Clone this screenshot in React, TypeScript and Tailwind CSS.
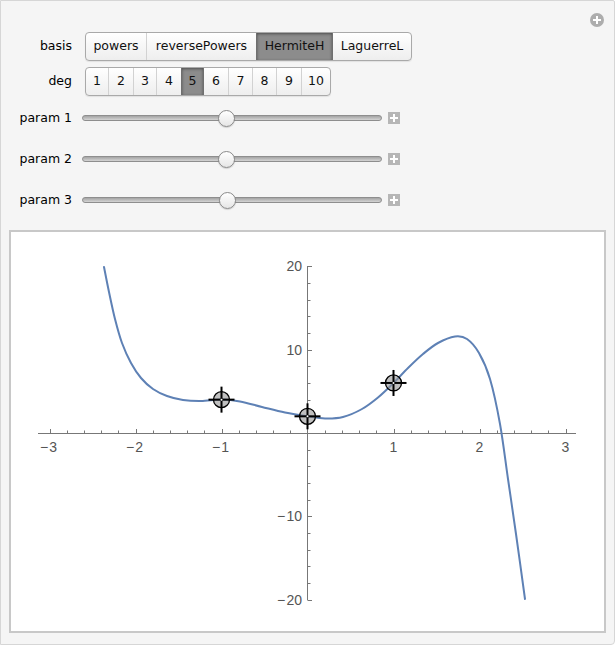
import React from "react";

const X0 = 307.5;
const SX = 86;
const Y0 = 434;
const SY = 8.34;
const px = (v: number) => X0 + SX * v;
const py = (v: number) => Y0 - SY * v;

const curvePts: [number, number][] = [
  [104, 268], [109, 293], [115, 320], [122, 344], [131, 364], [141, 379], [153, 390],
  [167, 397], [183, 401], [201, 402], [221.5, 400.6], [240, 402.5], [262, 408],
  [285, 413.5], [307.5, 417.3], [325, 419.5], [343, 418], [362, 410], [378, 398.5],
  [393.5, 384], [408, 369], [423, 355], [438, 344], [455, 337.5], [467, 340],
  [479, 354], [490, 380], [500, 425], [508, 480], [516, 535], [525, 600],
];

function splinePath(pts: [number, number][]) {
  let d = `M${pts[0][0]},${pts[0][1]}`;
  for (let i = 0; i < pts.length - 1; i++) {
    const p0 = pts[i - 1] || pts[i];
    const p1 = pts[i];
    const p2 = pts[i + 1];
    const p3 = pts[i + 2] || p2;
    const c1x = p1[0] + (p2[0] - p0[0]) / 6;
    const c1y = p1[1] + (p2[1] - p0[1]) / 6;
    const c2x = p2[0] - (p3[0] - p1[0]) / 6;
    const c2y = p2[1] - (p3[1] - p1[1]) / 6;
    d += ` C${c1x.toFixed(2)},${c1y.toFixed(2)} ${c2x.toFixed(2)},${c2y.toFixed(2)} ${p2[0]},${p2[1]}`;
  }
  return d;
}

function Plot() {
  const axis = "#777777";
  const xTicks: React.ReactNode[] = [];
  for (let k = -15; k <= 15; k++) {
    if (k === 0) continue;
    const v = k / 5;
    const x = Math.round(px(v)) + 0.5;
    const major = k % 5 === 0;
    xTicks.push(
      <line key={"xt" + k} x1={x} x2={x} y1={434.5} y2={major ? 430 : 431.5} stroke={axis} strokeWidth={1} />
    );
  }
  const yTicks: React.ReactNode[] = [];
  for (let k = -10; k <= 10; k++) {
    if (k === 0) continue;
    const v = k * 2;
    const y = Math.round(py(v)) + 0.5;
    const major = k % 5 === 0;
    yTicks.push(
      <line key={"yt" + k} x1={307.5} x2={major ? 312 : 310.5} y1={y} y2={y} stroke={axis} strokeWidth={1} />
    );
  }
  const xLabels = [-3, -2, -1, 1, 2, 3];
  const yLabels = [20, 10, -10, -20];
  const fmt = (v: number) => (v < 0 ? "\u2212\u200A" + Math.abs(v) : String(v));
  const markers: [number, number][] = [
    [-1, 4],
    [0, 2],
    [1, 6],
  ];
  return (
    <svg width={593} height={399} viewBox="11 233 593 399" className="block">
      <line x1={38} x2={576} y1={434.5} y2={434.5} stroke={axis} strokeWidth={1} />
      <line x1={307.5} x2={307.5} y1={267} y2={601} stroke={axis} strokeWidth={1} />
      {xTicks}
      {yTicks}
      {xLabels.map((v) => (
        <text
          key={"xl" + v}
          x={px(v) - (v < 0 ? 1 : 0)}
          y={453}
          textAnchor="middle"
          fontFamily="'Liberation Sans', Arial, sans-serif"
          fontSize={14}
          fill="#555555"
        >
          {fmt(v)}
        </text>
      ))}
      {yLabels.map((v) => (
        <text
          key={"yl" + v}
          x={302}
          y={py(v) + 5}
          textAnchor="end"
          fontFamily="'Liberation Sans', Arial, sans-serif"
          fontSize={14}
          fill="#555555"
        >
          {fmt(v)}
        </text>
      ))}
      <path d={splinePath(curvePts)} fill="none" stroke="#5e81b5" strokeWidth={2} strokeLinejoin="round" strokeLinecap="round" />
      {markers.map(([vx, vy]) => {
        const cx = px(vx);
        const cy = py(vy);
        return (
          <g key={"m" + vx}>
            <circle cx={cx} cy={cy} r={8} fill="rgba(150,150,150,0.6)" stroke="#000" strokeWidth={1.3} />
            <line x1={cx - 13} x2={cx + 13} y1={cy} y2={cy} stroke="#000" strokeWidth={2} />
            <line x1={cx} x2={cx} y1={cy - 13} y2={cy + 13} stroke="#000" strokeWidth={2} />
            <circle cx={cx} cy={cy} r={1} fill="#ffffff" />
          </g>
        );
      })}
    </svg>
  );
}

function Segmented({ items, selected, widths }: { items: string[]; selected: number; widths: number[] }) {
  return (
    <div className="flex h-[29px] rounded-[4px] border border-[#a9a9a9] bg-gradient-to-b from-[#ffffff] to-[#eeeeee] shadow-[0_1px_1px_rgba(0,0,0,0.08)] overflow-hidden">
      {items.map((it, i) => {
        const sel = i === selected;
        const prevSel = i - 1 === selected;
        return (
          <div
            key={it}
            style={{ width: widths[i] }}
            className={
              sel
                ? "flex items-center justify-center bg-[#8c8c8c] text-[#111111] shadow-[inset_0_1px_3px_rgba(0,0,0,0.45)] border-x border-[#6f6f6f]"
                : i === 0 || prevSel
                ? "flex items-center justify-center text-[#111111]"
                : "flex items-center justify-center text-[#111111] border-l border-[#d2d2d2]"
            }
          >
            {it}
          </div>
        );
      })}
    </div>
  );
}

function SliderRow({ label, thumb }: { label: string; thumb: number }) {
  return (
    <div className="flex items-center h-[18px]">
      <div className="w-[71px] text-right text-[12.5px] text-black leading-none">{label}</div>
      <div className="relative ml-[10px] w-[300px] h-[18px] flex items-center">
        <div className="w-full h-[6px] rounded-full border border-[#8e8e8e] bg-gradient-to-b from-[#a4a4a4] to-[#d4d4d4]" />
        <div
          className="absolute top-[0.5px] w-[17px] h-[17px] rounded-full border border-[#8a8a8a] bg-gradient-to-b from-[#ffffff] to-[#e6e6e6] shadow-[0_1px_1px_rgba(0,0,0,0.15)]"
          style={{ left: thumb }}
        />
      </div>
      <div className="relative ml-[6px] w-[12px] h-[12px] bg-[#b6b6b6]">
        <div className="absolute left-[2px] top-[5px] w-[8px] h-[2px] bg-white" />
        <div className="absolute left-[5px] top-[2px] w-[2px] h-[8px] bg-white" />
      </div>
    </div>
  );
}

export default function App() {
  return (
    <div className="w-[616px] h-[648px] bg-white font-['DejaVu_Sans',sans-serif]">
      <div className="relative w-[615px] h-[645px] bg-[#f5f5f5] border border-[#d6d6d6] rounded-br-[4px] rounded-tr-[2px]">
        <div className="absolute left-[589px] top-[12px] w-[14px] h-[14px] rounded-full bg-[#adadad]">
          <div className="absolute left-[3px] top-[6px] w-[8px] h-[2px] bg-white" />
          <div className="absolute left-[6px] top-[3px] w-[2px] h-[8px] bg-white" />
        </div>
        <div className="pt-[31px] flex flex-col">
          <div className="flex items-center h-[29px] text-[12.5px]">
            <div className="w-[71px] text-right text-black">basis</div>
            <div className="ml-[13px]">
              <Segmented
                items={["powers", "reversePowers", "HermiteH", "LaguerreL"]}
                selected={2}
                widths={[60, 110, 77, 78]}
              />
            </div>
          </div>
          <div className="flex items-center h-[29px] mt-[6px] text-[12.5px]">
            <div className="w-[71px] text-right text-black">deg</div>
            <div className="ml-[13px]">
              <Segmented
                items={["1", "2", "3", "4", "5", "6", "7", "8", "9", "10"]}
                selected={4}
                widths={[22, 25, 23, 25, 23, 24, 24, 24, 25, 29]}
              />
            </div>
          </div>
          <div className="mt-[13px] flex flex-col gap-[23px]">
            <SliderRow label="param 1" thumb={136} />
            <SliderRow label="param 2" thumb={136} />
            <SliderRow label="param 3" thumb={137} />
          </div>
          <div className="ml-[8px] mt-[21px] w-[597px] h-[403px] border-2 border-[#c8c8c8] bg-white">
            <Plot />
          </div>
        </div>
      </div>
    </div>
  );
}
